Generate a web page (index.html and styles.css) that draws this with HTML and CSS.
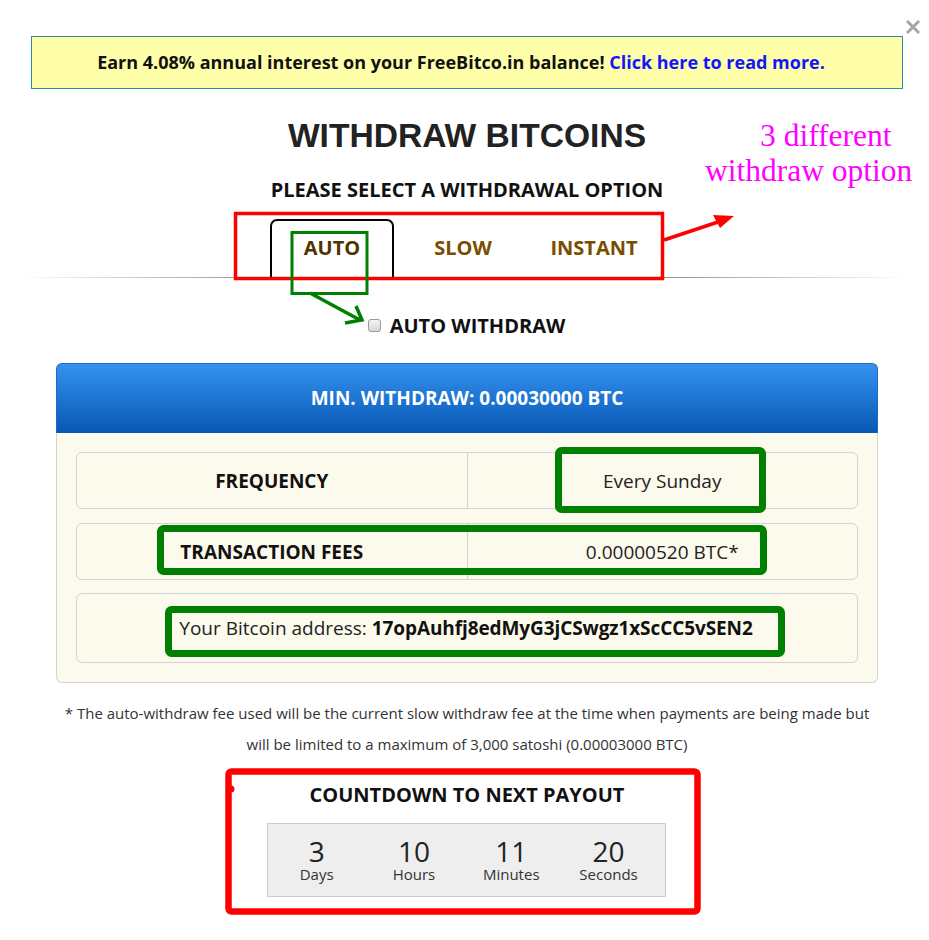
FILE: index.html
```html
<!DOCTYPE html>
<html>
<head>
<meta charset="utf-8">
<link rel="stylesheet" href="styles.css">
</head>
<body>
<div class="page">
  <svg class="close" width="14" height="14" viewBox="0 0 14 14"><path d="M2 2 L12 12 M12 2 L2 12" stroke="#a6a6a6" stroke-width="3" stroke-linecap="square"/></svg>
  <div class="banner">Earn 4.08% annual interest on your FreeBitco.in balance! <a class="banner-link">Click here to read more.</a></div>
  <h1 class="title">WITHDRAW BITCOINS</h1>
  <h2 class="subtitle">PLEASE SELECT A WITHDRAWAL OPTION</h2>
  <div class="tabs-wrap">
    <div class="tabs">
      <div class="tab active">AUTO</div>
      <div class="tab">SLOW</div>
      <div class="tab">INSTANT</div>
    </div>
  </div>
  <div class="auto-row"><span class="checkbox"></span><span class="auto-label">AUTO WITHDRAW</span></div>
  <div class="panel">
    <div class="panel-head">MIN. WITHDRAW: 0.00030000 BTC</div>
    <div class="panel-body">
      <div class="row split">
        <div class="cell bold">FREQUENCY</div>
        <div class="cell divider">Every Sunday</div>
      </div>
      <div class="row split">
        <div class="cell bold">TRANSACTION FEES</div>
        <div class="cell divider">0.00000520 BTC*</div>
      </div>
      <div class="row tall">
        <div class="cell">Your Bitcoin address: <b>17opAuhfj8edMyG3jCSwgz1xScCC5vSEN2</b></div>
      </div>
    </div>
  </div>
  <p class="note">* The auto-withdraw fee used will be the current slow withdraw fee at the time when payments are being made but<br>will be limited to a maximum of 3,000 satoshi (0.00003000 BTC)</p>
  <h3 class="cd-title">COUNTDOWN TO NEXT PAYOUT</h3>
  <div class="cd-box">
    <div class="cd-col"><span class="cd-num">3</span><span class="cd-lbl">Days</span></div>
    <div class="cd-col"><span class="cd-num">10</span><span class="cd-lbl">Hours</span></div>
    <div class="cd-col"><span class="cd-num">11</span><span class="cd-lbl">Minutes</span></div>
    <div class="cd-col"><span class="cd-num">20</span><span class="cd-lbl">Seconds</span></div>
  </div>
</div>
<svg class="annot" width="929" height="940" viewBox="0 0 929 940">
  <text class="magenta" x="760" y="146">3 different</text>
  <text class="magenta" x="705" y="181">withdraw option</text>
  <rect x="235.5" y="213.5" width="427" height="65" fill="none" stroke="#ff0000" stroke-width="3.5"/>
  <line x1="664" y1="240" x2="718" y2="222" stroke="#ff0000" stroke-width="3.5"/>
  <path d="M734 216 L713 215 L720 228 Z" fill="#ff0000"/>
  <rect x="292" y="232.5" width="75" height="61" fill="none" stroke="#008000" stroke-width="3"/>
  <line x1="310" y1="293" x2="360" y2="320" stroke="#008000" stroke-width="3.5"/>
  <path d="M356 306 L362 320 L345 323" fill="none" stroke="#008000" stroke-width="3.5"/>
  <rect x="558.5" y="450.5" width="204" height="59" rx="3" fill="none" stroke="#008000" stroke-width="7"/>
  <rect x="160.5" y="528.5" width="603" height="43" rx="3" fill="none" stroke="#008000" stroke-width="7"/>
  <rect x="168.5" y="609.5" width="613" height="44" rx="3" fill="none" stroke="#008000" stroke-width="7"/>
  <rect x="228.5" y="771.5" width="469" height="140" rx="3" fill="none" stroke="#ff0000" stroke-width="6.5"/>
  <circle cx="231" cy="789" r="3.5" fill="#ff0000"/>
</svg>
</body>
</html>
```
FILE: styles.css
```css
html, body {
  margin: 0;
  padding: 0;
  background: #ffffff;
}
body {
  width: 929px;
  height: 940px;
  position: relative;
  overflow: hidden;
  font-family: "Open Sans", "Liberation Sans", sans-serif;
  color: #222;
}
.page {
  width: 872px;
  margin-left: 31px;
  padding-top: 36px;
}
.close {
  position: absolute;
  left: 906px;
  top: 20px;
}
.banner {
  border: 1px solid #2f89ab;
  background: #ffffaa;
  padding: 14px 12px 15px 0;
  line-height: 22px;
  font-size: 18px;
  font-weight: 700;
  text-align: center;
  color: #111;
  white-space: nowrap;
}
.banner-link {
  color: #1414ff;
}
.title {
  margin: 27px 0 0;
  font-family: "Liberation Sans", Arial, sans-serif;
  font-weight: 700;
  font-size: 33.6px;
  line-height: 40px;
  text-align: center;
  color: #222;
}
.subtitle {
  margin: 22px 0 0;
  font-size: 20px;
  font-weight: 700;
  line-height: 24px;
  text-align: center;
  color: #111;
}
.tabs-wrap {
  margin-top: 17px;
  position: relative;
  margin-left: -11px;
  margin-right: -6px;
}
.tabs-wrap::after {
  content: "";
  display: block;
  height: 1px;
  background: linear-gradient(to right, rgba(0,0,0,0) 0%, #888 30%, #333 50%, #888 70%, rgba(0,0,0,0) 100%);
}
.tabs {
  display: flex;
  gap: 7px;
  padding-left: 250px;
}
.tab {
  width: 124px;
  box-sizing: border-box;
  height: 58px;
  padding-top: 15px;
  line-height: 24px;
  font-size: 20px;
  font-weight: 700;
  text-align: center;
  color: #7a4d00;
  border: 2px solid transparent;
  border-bottom: 0;
}
.tab.active {
  border-color: #000;
  border-radius: 7px 7px 0 0;
  color: #4f3300;
  background: #fff;
  position: relative;
  z-index: 1;
  margin-bottom: -1px;
  height: 59px;
}
.auto-row {
  margin-top: 36px;
  display: flex;
  justify-content: center;
  align-items: center;
  gap: 9px;
  line-height: 24px;
  padding-right: 1px;
}
.checkbox {
  width: 11px;
  height: 11px;
  border: 1px solid #9a9a9a;
  border-radius: 3px;
  background: linear-gradient(#f4f4f4, #d6d6d6);
  margin-top: -2px;
}
.auto-label {
  font-size: 20px;
  font-weight: 700;
  color: #111;
}
.panel {
  margin: 25px 25px 0 25px;
}
.panel-head {
  height: 70px;
  box-sizing: border-box;
  border: 1px solid #1c6cc4;
  border-bottom: 0;
  border-radius: 6px 6px 0 0;
  background: linear-gradient(#3592f0, #0758b4);
  color: #fff;
  font-weight: 700;
  font-size: 19px;
  display: flex;
  align-items: center;
  justify-content: center;
  padding-bottom: 1px;
}
.panel-body {
  background: #fcfaec;
  border: 1px solid #d4d4d4;
  border-top: 0;
  border-radius: 0 0 6px 6px;
  padding: 19px 19px 19px;
  display: flex;
  flex-direction: column;
  gap: 14px;
}
.row {
  height: 57px;
  box-sizing: border-box;
  border: 1px solid #d2d2d2;
  border-radius: 6px;
  display: flex;
  font-size: 19px;
  color: #222;
}
.row + .row + .row {
  margin-top: -1px;
}
.row.tall {
  height: 70px;
}
.cell {
  flex: 1;
  display: flex;
  align-items: center;
  justify-content: center;
}
.row.tall .cell {
  padding-right: 2px;
}
.cell.bold {
  font-weight: 700;
  color: #111;
}
.cell.divider {
  border-left: 1px solid #cfcfcf;
}
.cell b {
  font-weight: 700;
  color: #111;
  margin-left: 5px;
  letter-spacing: -0.1px;
}
.note {
  margin: 15px 0 0;
  font-size: 15px;
  line-height: 31px;
  color: #333;
  text-align: center;
  margin-left: -20px;
  margin-right: -20px;
}
.cd-title {
  margin: 23px 0 0;
  font-size: 20px;
  font-weight: 700;
  line-height: 24px;
  text-align: center;
  color: #111;
}
.cd-box {
  margin: 16px 0 0 236px;
  width: 399px;
  height: 74px;
  box-sizing: border-box;
  background: #eeeeee;
  border: 1px solid #cccccc;
  display: grid;
  grid-template-columns: repeat(4, 97.3px);
  padding-top: 13px;
}
.cd-col {
  display: flex;
  flex-direction: column;
  align-items: center;
}
.cd-num {
  font-size: 28px;
  line-height: 28px;
  color: #222;
}
.cd-lbl {
  font-size: 15px;
  line-height: 18px;
  color: #333;
}
.annot {
  position: absolute;
  left: 0;
  top: 0;
  z-index: 10;
  pointer-events: none;
}
.magenta {
  font-family: "Liberation Serif", "Times New Roman", serif;
  font-size: 31.5px;
  fill: #ff00ff;
}
```
